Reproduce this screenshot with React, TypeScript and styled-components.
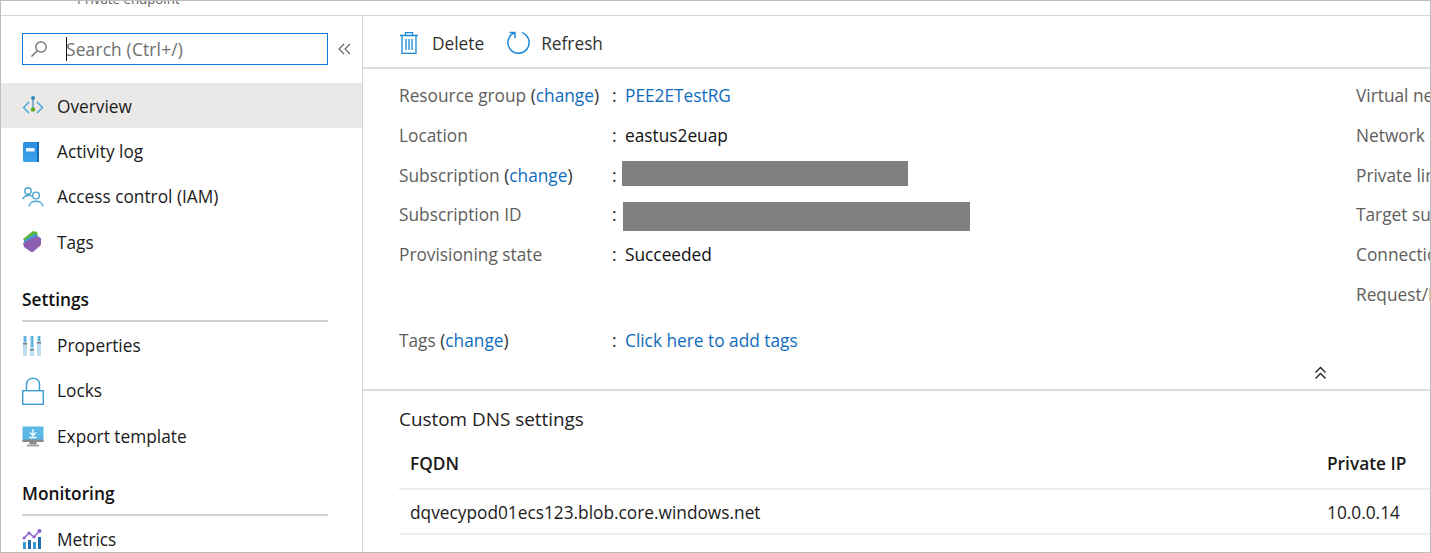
import styled, { createGlobalStyle } from "styled-components";

const GlobalStyle = createGlobalStyle`
  html, body {
    margin: 0;
    padding: 0;
    background: #fff;
  }
  body {
    font-family: "Open Sans", "Noto Sans", sans-serif;
    font-size: 17.3px;
    color: #1b1a19;
  }
`;

const Frame = styled.div`
  box-sizing: border-box;
  width: 1431px;
  height: 553px;
  border: 1px solid #bdbdbd;
  border-top: 0;
  overflow: hidden;
  display: flex;
  flex-direction: column;
`;

const TopStrip = styled.div`
  flex: none;
  box-sizing: border-box;
  height: 16px;
  border-top: 1px solid #bdbdbd;
  border-bottom: 1px solid #d4d4d4;
  overflow: hidden;
  padding-left: 76px;
`;

const Crumb = styled.div`
  font-size: 13.3px;
  line-height: 14px;
  margin-top: -9px;
  color: #605e5c;
`;

const Body = styled.div`
  flex: 1;
  display: flex;
  min-height: 0;
`;

const Sidebar = styled.aside`
  flex: none;
  box-sizing: border-box;
  width: 362px;
  border-right: 1px solid #d4d4d4;
  overflow: hidden;
`;

const SearchRow = styled.div`
  display: flex;
  align-items: center;
  padding: 17px 0 18px 21px;
`;

const SearchBox = styled.div`
  box-sizing: border-box;
  width: 306px;
  height: 32px;
  border: 1px solid #0f7ad1;
  display: flex;
  align-items: center;
  padding-left: 6px;
`;

const Caret = styled.span`
  width: 1px;
  height: 24px;
  background: #111;
  margin-left: 17px;
`;

const Placeholder = styled.span`
  color: #6e6e6e;
  margin-left: -1px;
  letter-spacing: 0.2px;
`;

const Collapse = styled.div`
  margin-left: 10px;
  display: flex;
`;

const NavItem = styled.div<{ $active?: boolean }>`
  box-sizing: border-box;
  height: 45.3px;
  display: flex;
  align-items: center;
  padding: 1.5px 0 0 21px;
  background: ${(p) => (p.$active ? "#ebe9e8" : "transparent")};
  color: #1b1a19;
`;

const NavIcon = styled.span`
  width: 35px;
  height: 28px;
  flex: none;
  display: flex;
  align-items: center;
`;

const NavGroup = styled.div`
  margin-top: 24px;
`;

const GroupTitle = styled.div`
  margin: 0 34px 0 21px;
  padding-bottom: 8px;
  height: 24px;
  line-height: 24px;
  font-weight: 600;
  color: #111;
  border-bottom: 2px solid #d2d2d2;
`;

const Main = styled.main`
  flex: 1;
  min-width: 0;
  overflow: hidden;
`;

const Wide = styled.div`
  width: 1914px;
`;

const Toolbar = styled.div`
  box-sizing: border-box;
  height: 53px;
  padding: 2px 0 0 36px;
  border-bottom: 2px solid #dcdcdc;
  display: flex;
  align-items: center;
`;

const ToolButton = styled.div<{ $gap: number }>`
  display: flex;
  align-items: center;
  gap: ${(p) => p.$gap}px;
  margin-right: 22px;
  color: #323130;
`;

const ToolLabel = styled.span`
  margin-top: 2px;
`;

const Essentials = styled.section`
  box-sizing: border-box;
  height: 322px;
  padding: 7px 0 0 36px;
  border-bottom: 2px solid #dcdcdc;
  position: relative;
`;

const Columns = styled.div`
  display: flex;
`;

const LeftColumn = styled.div`
  width: 957px;
  flex: none;
`;

const Row = styled.div<{ $gap?: number }>`
  height: 39.7px;
  display: flex;
  align-items: center;
  margin-top: ${(p) => p.$gap ?? 0}px;
`;

const Label = styled.div`
  width: 213px;
  flex: none;
  color: #605e5c;
`;

const Paren = styled.span`
  color: #323130;
`;

const Colon = styled.span`
  width: 13px;
  flex: none;
`;

const Value = styled.span`
  color: #111;
`;

const Link = styled.span`
  color: #0f6cbd;
`;

const Redacted = styled.div<{ $w: number; $h: number; $shift: number; $drop: number }>`
  width: ${(p) => p.$w}px;
  height: ${(p) => p.$h}px;
  background: #808080;
  margin-left: ${(p) => p.$shift}px;
  margin-top: ${(p) => p.$drop}px;
`;

const RightLabel = styled.div`
  height: 39.7px;
  display: flex;
  align-items: center;
  color: #605e5c;
`;

const CollapseChevron = styled.div`
  position: absolute;
  left: 951px;
  top: 297px;
  display: flex;
`;

const DnsSection = styled.section`
  padding: 15px 0 0 36px;
`;

const DnsTitle = styled.h2`
  margin: 0;
  font-size: 18.9px;
  font-weight: 400;
  line-height: 26px;
  color: #222;
`;

const TableRow = styled.div<{ $head?: boolean }>`
  height: ${(p) => (p.$head ? 58 : 45)}px;
  display: flex;
  align-items: ${(p) => (p.$head ? "flex-end" : "center")};
  padding-left: 11px;
  box-sizing: border-box;
  padding-top: ${(p) => (p.$head ? 0 : 2)}px;
  padding-bottom: ${(p) => (p.$head ? 13 : 0)}px;
  border-bottom: 2px solid #eeeeee;
  font-weight: ${(p) => (p.$head ? 600 : 400)};
  color: #1b1a19;
`;

const FqdnCell = styled.div`
  width: 917px;
  flex: none;
`;

const OverviewIcon = () => (
  <svg width="22" height="22" viewBox="0 0 22 22" fill="none">
    <path d="M7 7 L1.5 12.5 L7 18" stroke="#3ea3d6" strokeWidth="1.4" />
    <path d="M15 7 L20.5 12.5 L15 18" stroke="#3ea3d6" strokeWidth="1.4" />
    <path d="M11 3 V13" stroke="#3f8bb5" strokeWidth="1.2" />
    <circle cx="11" cy="3" r="2" fill="#2f87bd" />
    <circle cx="11" cy="14.5" r="2.2" fill="#5ea91f" />
  </svg>
);

const LogIcon = () => (
  <svg width="18" height="22" viewBox="0 0 18 22">
    <defs>
      <linearGradient id="book" x1="0" y1="0" x2="0" y2="1">
        <stop offset="0" stopColor="#2b8fe0" />
        <stop offset="1" stopColor="#3aa2ee" />
      </linearGradient>
    </defs>
    <rect x="1" y="1" width="16" height="20" rx="1.5" fill="url(#book)" />
    <rect x="15" y="1" width="2" height="20" fill="#1a6db8" />
    <rect x="4" y="7" width="8.5" height="3.5" fill="#f0f7fd" />
  </svg>
);

const AccessIcon = () => (
  <svg width="22" height="22" viewBox="0 0 22 22" fill="none" stroke="#4aa5d2" strokeWidth="1.4">
    <circle cx="6" cy="5" r="3.2" />
    <path d="M0.8 13 C2 9 9 8.5 10 10.5" />
    <circle cx="14" cy="9.5" r="3.4" />
    <path d="M7 20.5 C7.5 13.5 20.5 13.5 21 20.5" />
  </svg>
);

const TagIcon = () => (
  <svg width="20" height="24" viewBox="0 0 20 24">
    <path d="M1 9 L11 1 L15 2 L16 6 L4 14 Z" fill="#5fb536" />
    <path d="M1.5 11 L13 3.5 L18 8 L6 16 Z" fill="#3f9fd0" />
    <path d="M1 13 L14 6 L19 8 L19 15 L11 22 L9 22 L2 17 Z" fill="#8d5fb3" />
  </svg>
);

const PropertiesIcon = () => (
  <svg width="20" height="22" viewBox="0 0 20 22">
    <rect x="1" y="1" width="4" height="20" fill="#bcdff0" />
    <rect x="8" y="1" width="4" height="20" fill="#bcdff0" />
    <rect x="15" y="1" width="4" height="20" fill="#bcdff0" />
    <rect x="2.4" y="1" width="1.4" height="6" fill="#3a9fd6" />
    <rect x="1" y="8" width="4" height="1.5" fill="#7a7a7a" />
    <rect x="9.4" y="1" width="1.4" height="11" fill="#3a9fd6" />
    <rect x="8" y="14" width="4" height="1.5" fill="#7a7a7a" />
    <rect x="16.4" y="1" width="1.4" height="5" fill="#3a9fd6" />
    <rect x="15" y="7" width="4" height="1.5" fill="#7a7a7a" />
  </svg>
);

const LockIcon = () => (
  <svg width="22" height="28" viewBox="0 0 22 28" fill="none" stroke="#3a9ccf" strokeWidth="1.4">
    <rect x="0.7" y="13.7" width="20.6" height="13.6" />
    <path d="M4.5 13.5 V7.5 C4.5 -0.8 17.5 -0.8 17.5 7.5 V13.5" />
  </svg>
);

const ExportIcon = () => (
  <svg width="22" height="21" viewBox="0 0 22 21">
    <rect x="0.5" y="0.5" width="21" height="15" fill="#5cb8e6" />
    <rect x="0.5" y="13.5" width="21" height="2.5" fill="#8a8a8a" />
    <rect x="7.5" y="16" width="7" height="2.5" fill="#8a8a8a" />
    <rect x="5" y="18.5" width="12" height="2" fill="#a5a5a5" />
    <path d="M11 3 V9 M8 6.5 L11 9.5 L14 6.5 M7.5 11.5 H14.5" stroke="#fff" strokeWidth="1.3" fill="none" />
  </svg>
);

const MetricsIcon = () => (
  <svg width="20" height="20" viewBox="0 0 20 20">
    <rect x="1" y="13" width="3" height="7" fill="#3a9bdc" />
    <rect x="6" y="11" width="3" height="9" fill="#1f6fb5" />
    <rect x="11" y="13" width="3" height="7" fill="#3a9bdc" />
    <rect x="16" y="8" width="3" height="12" fill="#1f6fb5" />
    <path d="M2 9 L7 4 L12 8 L17.5 2" stroke="#8a5fd1" strokeWidth="1.5" fill="none" />
    <circle cx="2" cy="9" r="1.5" fill="#8a5fd1" />
    <circle cx="7" cy="4" r="1.5" fill="#8a5fd1" />
    <circle cx="12" cy="8" r="1.5" fill="#8a5fd1" />
    <circle cx="17.5" cy="2" r="2" fill="#8a5fd1" />
  </svg>
);

const SearchIcon = () => (
  <svg width="20" height="18" viewBox="0 0 20 18" fill="none" stroke="#605e5c" strokeWidth="1.2">
    <circle cx="12" cy="7" r="5.2" />
    <path d="M8.2 10.8 L2.5 16.5" />
  </svg>
);

const DoubleLeft = () => (
  <svg width="13" height="12" viewBox="0 0 13 12" fill="none" stroke="#605e5c" strokeWidth="1.1">
    <path d="M6 1 L1 6 L6 11" />
    <path d="M12 1 L7 6 L12 11" />
  </svg>
);

const DoubleUp = () => (
  <svg width="13" height="14" viewBox="0 0 13 14" fill="none" stroke="#222" strokeWidth="1.4">
    <path d="M1.5 6.5 L6.5 1.5 L11.5 6.5" />
    <path d="M1.5 12.5 L6.5 7.5 L11.5 12.5" />
  </svg>
);

const TrashIcon = () => (
  <svg width="20" height="24" viewBox="0 0 20 24" fill="none" stroke="#1b87d8" strokeWidth="1.3">
    <path d="M1 4.5 H19 M6.5 4.5 V1.7 H13.5 V4.5" />
    <path d="M3 4.5 V22.3 H17 V4.5" />
    <path d="M7 8 V19 M10 8 V19 M13 8 V19" />
  </svg>
);

const RefreshIcon = () => (
  <svg width="24" height="25" viewBox="0 0 24 25" fill="none" stroke="#1b87d8" strokeWidth="1.5">
    <path d="M8.5 2.8 A10.6 10.6 0 1 0 16 2.6" />
    <path d="M3.5 2.6 H9 V8" />
  </svg>
);

const rightLabels = ["Virtual network/subnet", "Network interface", "Private link resource", "Target sub-resource", "Connection status", "Request/Response"];

export default function App() {
  return (
    <>
      <GlobalStyle />
      <Frame>
        <TopStrip>
          <Crumb>Private endpoint</Crumb>
        </TopStrip>
        <Body>
          <Sidebar>
            <SearchRow>
              <SearchBox>
                <SearchIcon />
                <Caret />
                <Placeholder>Search (Ctrl+/)</Placeholder>
              </SearchBox>
              <Collapse>
                <DoubleLeft />
              </Collapse>
            </SearchRow>
            <NavItem $active>
              <NavIcon><OverviewIcon /></NavIcon>Overview
            </NavItem>
            <NavItem>
              <NavIcon><LogIcon /></NavIcon>Activity log
            </NavItem>
            <NavItem>
              <NavIcon><AccessIcon /></NavIcon>Access control (IAM)
            </NavItem>
            <NavItem>
              <NavIcon><TagIcon /></NavIcon>Tags
            </NavItem>
            <NavGroup>
              <GroupTitle>Settings</GroupTitle>
              <NavItem>
                <NavIcon><PropertiesIcon /></NavIcon>Properties
              </NavItem>
              <NavItem>
                <NavIcon><LockIcon /></NavIcon>Locks
              </NavItem>
              <NavItem>
                <NavIcon><ExportIcon /></NavIcon>Export template
              </NavItem>
            </NavGroup>
            <NavGroup>
              <GroupTitle>Monitoring</GroupTitle>
              <NavItem>
                <NavIcon><MetricsIcon /></NavIcon>Metrics
              </NavItem>
            </NavGroup>
          </Sidebar>
          <Main>
            <Wide>
              <Toolbar>
                <ToolButton $gap={13}><TrashIcon /><ToolLabel>Delete</ToolLabel></ToolButton>
                <ToolButton $gap={11}><RefreshIcon /><ToolLabel>Refresh</ToolLabel></ToolButton>
              </Toolbar>
              <Essentials>
                <Columns>
                  <LeftColumn>
                    <Row>
                      <Label>Resource group <Paren>(<Link>change</Link>)</Paren></Label>
                      <Colon>:</Colon>
                      <Link>PEE2ETestRG</Link>
                    </Row>
                    <Row>
                      <Label>Location</Label>
                      <Colon>:</Colon>
                      <Value>eastus2euap</Value>
                    </Row>
                    <Row>
                      <Label>Subscription <Paren>(<Link>change</Link>)</Paren></Label>
                      <Colon>:</Colon>
                      <Redacted $w={286} $h={25} $shift={-3} $drop={-4} />
                    </Row>
                    <Row>
                      <Label>Subscription ID</Label>
                      <Colon>:</Colon>
                      <Redacted $w={347} $h={29} $shift={-2} $drop={3} />
                    </Row>
                    <Row>
                      <Label>Provisioning state</Label>
                      <Colon>:</Colon>
                      <Value>Succeeded</Value>
                    </Row>
                    <Row $gap={46}>
                      <Label>Tags <Paren>(<Link>change</Link>)</Paren></Label>
                      <Colon>:</Colon>
                      <Link>Click here to add tags</Link>
                    </Row>
                  </LeftColumn>
                  <div>
                    {rightLabels.map((label) => (
                      <RightLabel key={label}>{label}</RightLabel>
                    ))}
                  </div>
                </Columns>
                <CollapseChevron>
                  <DoubleUp />
                </CollapseChevron>
              </Essentials>
              <DnsSection>
                <DnsTitle>Custom DNS settings</DnsTitle>
                <TableRow $head>
                  <FqdnCell>FQDN</FqdnCell>
                  <div>Private IP</div>
                </TableRow>
                <TableRow>
                  <FqdnCell>dqvecypod01ecs123.blob.core.windows.net</FqdnCell>
                  <div>10.0.0.14</div>
                </TableRow>
              </DnsSection>
            </Wide>
          </Main>
        </Body>
      </Frame>
    </>
  );
}
